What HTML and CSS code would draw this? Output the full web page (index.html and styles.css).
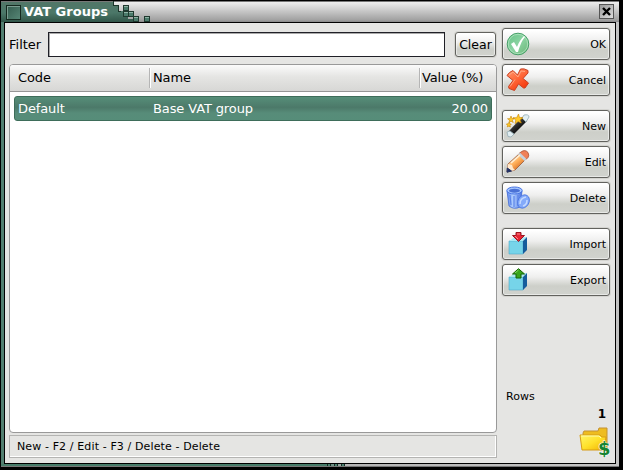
FILE: index.html
```html
<!DOCTYPE html>
<html lang="en">
<head>
<meta charset="utf-8">
<title>VAT Groups</title>
<link rel="stylesheet" href="styles.css">
</head>
<body>
<div class="window">
  <header class="titlebar">
    <div class="title-tab"><span class="window-menu"></span><h1>VAT Groups</h1></div>
    <svg class="steps" width="40" height="21" viewBox="0 0 40 21" shape-rendering="crispEdges">
      <defs><linearGradient id="tab" x2="0" y2="1"><stop stop-color="#527768"/><stop offset=".55" stop-color="#4b7768"/><stop offset="1" stop-color="#315548"/></linearGradient></defs>
      <path d="M0 0v4h5v6h5v5h5v3h5v3H0z" fill="url(#tab)"/>
      <path d="M0 0v4.500h5v6h3" fill="none" stroke="#1b3429"/>
      <g fill="#4b7b6b" stroke="#20392f"><path d="M10.500 4.500h5v5h-5zM10.500 10.500h5v5h-5zM15.500 10.500h5v5h-5zM20.500 15.500h5v5h-5zM31.500 15.500h5v5h-5z"/></g>
      <path d="M11 5.500h4M11 11.500h4M16 11.500h4M21 16.500h4M32 16.500h4" stroke="#8fb3a5"/>
    </svg>
    <button class="close" aria-label="Close"><svg width="15" height="15" viewBox="0 0 15 15"><path d="M4 4l7 7M11 4l-7 7" stroke="#000" stroke-width="2.400"/></svg></button>
  </header>
  <div class="body">
    <main class="main">
      <div class="filter"><label for="filter">Filter</label><input id="filter"><button class="button clear">Clear</button></div>
      <div class="table">
        <div class="head"><span>Code</span><span>Name</span><span>Value (%)</span></div>
        <div class="record"><span>Default</span><span>Base VAT group</span><span>20.00</span></div>
      </div>
      <footer class="status">New - F2 / Edit - F3 / Delete - Delete</footer>
    </main>
    <aside class="side">
      <button class="button"><svg width="24" height="24" viewBox="0 0 24 24"><defs><linearGradient id="ok" x2="1" y2="1"><stop stop-color="#65c386"/><stop offset=".5" stop-color="#8bd3a2"/><stop offset="1" stop-color="#69b574"/></linearGradient></defs><circle cx="12" cy="12" r="10.800" fill="url(#ok)" stroke="#469f67"/><circle cx="12" cy="12" r="9.700" fill="none" stroke="#b4e5c2" stroke-width=".8"/><path d="M5 12l3-2 3 5c2-5 4-8 7-11l1 1c-4 5-5 9-7 15h-2z" fill="#fff"/></svg>OK</button>
      <button class="button"><svg width="24" height="24" viewBox="0 0 24 24"><defs><linearGradient id="no" x2=".7" y2="1"><stop stop-color="#ff9c73"/><stop offset=".5" stop-color="#ff6a3c"/><stop offset="1" stop-color="#f5380c"/></linearGradient></defs><path d="M1 7.500Q3 4 7 2.500L11.500 7 14.500 1Q18 0 22 2.500L22 5 17 10.500 22.500 15 19 20 17.500 20 12.500 16 8.500 22.500 3 20.500 2.500 18.500 7 12.500z" fill="url(#no)" stroke="#c94225" stroke-linejoin="round"/><path d="M3 7l4-3 5 5 3-6 4 .5M4 18.500l5-7" fill="none" stroke="#ffb290" stroke-width=".8"/></svg>Cancel</button>
      <button class="button gap"><svg width="24" height="24" viewBox="0 0 24 24"><defs><linearGradient id="wand" x1=".2" y1=".2" x2=".6" y2=".65"><stop stop-color="#aaa"/><stop offset=".5" stop-color="#333"/><stop offset="1" stop-color="#111"/></linearGradient></defs><path d="M3 17L16 3l5 4L7 21z" fill="url(#wand)"/><path d="M16 4l2-3q5-1 5 2l-3 5zM1 18l3-1 4 3-3 3-3-.5z" fill="#e1eef2" stroke="#94acb4" stroke-width=".8"/><g fill="#ffc928" stroke="#c78704" stroke-width=".6"><path d="M12.500 0l1 3.500 3.500.2-3 2.300 1.300 3-3.300-1.500-3 2.200.8-3.700-2.800-2.300h3.700zM5 2l.8 2.300 2.500.2-2 1.600 1 2.400-2.300-1.300-2 1.600.5-2.700-2-1.400h2.500zM3 8.500l.7 1.300 1.600.3-1.200 1.200.2 1.700-1.500-.8-1.500.7.3-1.600-1.200-1.300 1.700-.2z"/></g></svg>New</button>
      <button class="button"><svg width="24" height="24" viewBox="0 0 24 24"><defs><linearGradient id="pen" x1=".2" y1=".2" x2=".7" y2=".8"><stop stop-color="#ffe2bd"/><stop offset=".5" stop-color="#ffae57"/><stop offset="1" stop-color="#d46a23"/></linearGradient></defs><path d="M2 14L14 3l7 5-12 12-8 2z" fill="url(#pen)" stroke="#95583a" stroke-width=".8"/><path d="M15 2q4-3 7 .5 1.500 3 0 5l-2 2-7-6z" fill="#f08058" stroke="#a74e34" stroke-width=".8"/><path d="M12 4.500l2-1.800 6.500 6.300-2 2z" fill="#c5d1dc"/><path d="M2 14l4 1 1 3 2 2-8 2z" fill="#ffe8cb"/><path d="M1.300 18l4.200 3-4.500 1.200z" fill="#223164" stroke="#223164"/><path d="M5 13L14 5" stroke="#fff0d7" stroke-width="1.500"/></svg>Edit</button>
      <button class="button"><svg width="24" height="24" viewBox="0 0 24 24"><defs><linearGradient id="bin"><stop stop-color="#5f88ed"/><stop offset=".4" stop-color="#b2d0ff"/><stop offset="1" stop-color="#4a71df"/></linearGradient></defs><path d="M1 5l2 15q5 4 11 1l2-16z" fill="url(#bin)" stroke="#416bd6" stroke-width=".8"/><path d="M4 9l1 10M8 10v11M12 9v11" stroke="#5b84e8" stroke-width="1.200"/><ellipse cx="8.500" cy="4.500" rx="7.700" ry="3.500" fill="#a8c8ff" stroke="#4774e4"/><ellipse cx="8.500" cy="4.700" rx="5.500" ry="2" fill="#4b72d6"/><ellipse cx="17.500" cy="15.500" rx="5.500" ry="7" transform="rotate(30 17.500 15.500)" fill="#84aafa" stroke="#4975df" stroke-width=".8"/><path d="M14 18q0-6 6-7M17 20q4-1 4-6" fill="none" stroke="#c4d9ff" stroke-width="1.500"/></svg>Delete</button>
      <button class="button gap"><svg width="24" height="24" viewBox="0 0 24 24"><path d="M3 9h14v13H3z" fill="#76d4e9" stroke="#52a9ca" stroke-width=".6"/><path d="M3 9l6-4h12l-4 4z" fill="#aae9f3"/><path d="M17 9l4-4v13l-4 4z" fill="#155c9c"/><path d="M10 .5h5v3h3.500l-6 6-6-6H10z" fill="#e52534" stroke="#9b1823"/><path d="M11 2h3M9 4l3 3" stroke="#ff8a8d"/></svg>Import</button>
      <button class="button"><svg width="24" height="24" viewBox="0 0 24 24"><path d="M3 9h14v13H3z" fill="#76d4e9" stroke="#52a9ca" stroke-width=".6"/><path d="M3 9l6-4h12l-4 4z" fill="#aae9f3"/><path d="M17 9l4-4v13l-4 4z" fill="#155c9c"/><path d="M12.500.7l6 5.300H15v4h-5V6H6.500z" fill="#38a51c" stroke="#176306"/><path d="M9 5l3.500-3" stroke="#86df61"/></svg>Export</button>
      <div class="summary"><span>Rows</span><strong>1</strong>
        <svg width="32" height="32" viewBox="0 0 32 32"><defs><linearGradient id="folder" x2="1" y2="1"><stop stop-color="#fff568"/><stop offset=".5" stop-color="#ffe12b"/><stop offset="1" stop-color="#f0b100"/></linearGradient></defs><path d="M5 7l1-2h14l1-3h8v20H6z" fill="#eebc20" stroke="#c49131"/><path d="M2 9h20l2 2h4l-2 13H4z" fill="url(#folder)" stroke="#d79c16"/><path d="M3 10h18l2 2" fill="none" stroke="#fffaaa"/><text x="20" y="29" class="dollar">$</text></svg>
      </div>
    </aside>
  </div>
  <div class="bottom-edge"><i></i><i></i><i></i></div>
</div>
</body>
</html>
```
FILE: styles.css
```css
* { box-sizing: border-box; }
body { margin: 0; background: #000; font: 13px "DejaVu Sans", sans-serif; color: #000; overflow: hidden; }
.window { width: 621px; height: 469px; padding: 1px 2px 2px 1px; background: #000; display: grid; grid-template-rows: 21px 442px 3px; }
.titlebar { display: flex; background: linear-gradient(#eee, #d0d0d0 35%, #a1a1a1 90%, #888); border-top: 1px solid #777; }
.title-tab { display: flex; align-items: center; width: 112px; padding-left: 5px; background: linear-gradient(#527768, #4b7768 55%, #315548); }
.window-menu { width: 15px; height: 15px; border: 1px solid #15291f; background: linear-gradient(135deg, #345c4e, #568675); box-shadow: inset 1px 1px #7b9d90; }
h1 { margin: -2px 0 0 3px; font-size: 13px; line-height: 19px; color: #fff; white-space: nowrap; }
.steps { margin-top: -1px; }
.close { width: 15px; height: 15px; margin: 2px 5px 0 auto; padding: 0; border: 1px solid #555; background: linear-gradient(135deg, #999, #ddd); }
.close svg { display: block; margin: -1px; }
.body { display: grid; grid-template-columns: 488px 108px; column-gap: 5px; margin: 0 3px; padding: 5px 5px 5px 4px; background: #e5e5e3; border: 1px solid #000; position: relative; box-shadow: -3px 0 #527f70, 3px 0 #c2c2c2; }
.main { display: grid; grid-template-rows: 25px 369px 23px; align-content: start; padding-top: 4px; }
.filter { display: grid; grid-template-columns: 39px 397px 51px; }
.filter label { line-height: 25px; }
.filter input { min-width: 0; border: 1px solid #202027; box-shadow: inset 1px 1px #aaa; background: #fff; }
.filter .clear { margin-left: 10px; width: 41px; padding: 0; height: 25px; justify-content: center; font-size: 12.5px; }
.table { margin-top: 7px; border: 1px solid #999; border-radius: 4px; background: #fff; height: 369px; overflow: hidden; letter-spacing: -.12px; }
.head { display: grid; grid-template-columns: 139px 270px 1fr; height: 27px; border-bottom: 1px solid #969696; background: linear-gradient(#fbfbfb, #e5e5e3 45%, #d7d7d5); }
.head span { padding-left: 3px; margin: 3px 0; line-height: 20px; border-left: 1px solid #b5b5b5; box-shadow: inset 1px 0 #fff; }
.head span:first-child { padding-left: 8px; border: 0; box-shadow: none; }
.head span:last-child { padding-left: 2px; }
.record { display: grid; grid-template-columns: 135px 240px 1fr; margin: 4px; height: 25px; padding: 0 3px; border: 1px solid #3e6d5a; border-radius: 3px; background: linear-gradient(#568e79, #4c7969 45%, #578c79 70%, #568d79); color: #fff; line-height: 23px; }
.record span:last-child { text-align: right; }
.status { margin-top: 9px; height: 23px; padding-left: 7px; border: 1px solid #b4b4b2; box-shadow: inset -1px -1px #fff; font-size: 11px; line-height: 21px; letter-spacing: .12px; }
.side { display: flex; flex-direction: column; gap: 4px; }
.button { display: flex; flex-shrink: 0; align-items: center; justify-content: space-between; height: 32px; padding: 0 3px; border: 1px solid #62625e; border-radius: 3px; background: linear-gradient(#fff 5%, #efefee 40%, #cdcfc9 70%, #d1d3ce); box-shadow: inset 0 0 0 1px #ffffff80, 0 0 0 1px #d4d4d0; color: #000; font: 11px "DejaVu Sans", sans-serif; }
.button.gap { margin-top: 10px; }
.summary { display: grid; grid-template-columns: 1fr; justify-items: end; margin-top: auto; }
.summary > span { justify-self: start; padding-left: 4px; font-size: 11px; line-height: 13px; }
.summary strong { line-height: 15px; margin: 4px 4px 4px; font-size: 12px; }
.dollar { font: bold 18px "DejaVu Sans", sans-serif; fill: #168331; stroke: #fff; stroke-width: 1px; paint-order: stroke; }
.bottom-edge { display: flex; gap: 3px; padding-left: 326px; background: linear-gradient(90deg, #477c69 325px, #b4b4b4 343px, #c5c5c5); border-bottom: 1px solid #777; }
.bottom-edge i { width: 4px; border: solid #142c23; border-width: 0 1px; background: #4c8270; }
```
